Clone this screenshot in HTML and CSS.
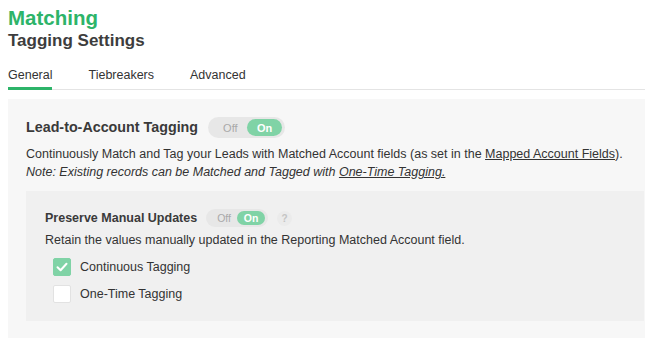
FILE: index.html
```html
<!DOCTYPE html>
<html lang="en">
<head>
<meta charset="utf-8">
<title>Matching - Tagging Settings</title>
<link rel="stylesheet" href="styles.css">
</head>
<body>
<div class="page">
  <h1 class="title">Matching</h1>
  <h2 class="subtitle">Tagging Settings</h2>
  <nav class="tabs">
    <span class="tab active">General</span>
    <span class="tab">Tiebreakers</span>
    <span class="tab">Advanced</span>
  </nav>
  <section class="panel">
    <div class="row">
      <h3 class="section-title">Lead-to-Account Tagging</h3>
      <div class="toggle">
        <span class="toggle-off">Off</span>
        <span class="toggle-on">On</span>
      </div>
    </div>
    <p class="desc">Continuously Match and Tag your Leads with Matched Account fields (as set in the <span class="link">Mapped Account Fields</span>).<br><em>Note: Existing records can be Matched and Tagged with <span class="link">One-Time Tagging.</span></em></p>
    <div class="subpanel">
      <div class="row">
        <h4 class="sub-title">Preserve Manual Updates</h4>
        <div class="toggle small">
          <span class="toggle-off">Off</span>
          <span class="toggle-on">On</span>
        </div>
        <span class="help">?</span>
      </div>
      <p class="sub-desc">Retain the values manually updated in the Reporting Matched Account field.</p>
      <ul class="checks">
        <li class="check-row">
          <span class="box checked"><svg width="12" height="10" viewBox="0 0 12 10"><path d="M1.5 5.2 L4.6 8.2 L10.5 1.8" fill="none" stroke="#fff" stroke-width="2" stroke-linecap="round" stroke-linejoin="round"/></svg></span>
          <span class="check-label">Continuous Tagging</span>
        </li>
        <li class="check-row">
          <span class="box"></span>
          <span class="check-label">One-Time Tagging</span>
        </li>
      </ul>
    </div>
  </section>
</div>
</body>
</html>
```

FILE: styles.css
```css
html, body {
  margin: 0;
  padding: 0;
  overflow: hidden;
  background: #ffffff;
}
body {
  font-family: "Liberation Sans", Arial, Helvetica, sans-serif;
  color: #333333;
}
.page {
  width: 654px;
  padding-left: 8px;
}
.title {
  margin: 6px 0 0 0;
  font-size: 20.5px;
  line-height: 24px;
  font-weight: bold;
  color: #2db469;
}
.subtitle {
  margin: 1px 0 0 0;
  font-size: 17px;
  line-height: 20px;
  font-weight: bold;
  color: #3d3d3d;
}
.tabs {
  display: flex;
  gap: 36px;
  margin-top: 16px;
  border-bottom: 1px solid #e4e4e4;
}
.tab {
  font-size: 12.5px;
  line-height: 16px;
  color: #333333;
  padding-bottom: 4px;
  border-bottom: 3px solid transparent;
  margin-bottom: -1px;
}
.tab.active {
  border-bottom-color: #2db469;
}
.panel {
  margin-top: 9px;
  background: #f7f7f7;
  padding: 18px 18px 17px 18px;
}
.row {
  display: flex;
  align-items: center;
}
.section-title {
  margin: 0 10px 0 0;
  font-size: 14.3px;
  line-height: 21px;
  font-weight: bold;
  color: #3a3a3a;
}
.toggle {
  display: flex;
  align-items: center;
  justify-content: space-between;
  box-sizing: border-box;
  width: 77px;
  height: 21px;
  padding: 2px 3px 2px 15px;
  border-radius: 11px;
  background: #e7e7e7;
}
.toggle-off {
  font-size: 11px;
  color: #a9a9a9;
}
.toggle-on {
  display: flex;
  align-items: center;
  justify-content: center;
  width: 35px;
  height: 17px;
  border-radius: 9px;
  background: #80d3a6;
  color: #ffffff;
  font-size: 11px;
  font-weight: bold;
}
.toggle.small {
  width: 62px;
  height: 18px;
  padding: 2px 3px 2px 11px;
  border-radius: 9px;
}
.toggle.small .toggle-off,
.toggle.small .toggle-on {
  font-size: 10.5px;
}
.toggle.small .toggle-on {
  width: 28px;
  height: 14px;
  border-radius: 7px;
}
.help {
  display: flex;
  align-items: center;
  justify-content: center;
  width: 15px;
  height: 15px;
  margin-left: 9px;
  border-radius: 50%;
  background: #ebebeb;
  color: #c4c4c4;
  font-size: 10px;
  font-weight: bold;
}
.desc {
  margin: 7px 0 0 0;
  font-size: 12.5px;
  line-height: 18px;
  color: #333333;
}
.link {
  text-decoration: underline;
}
.subpanel {
  margin-top: 10px;
  background: #f0f0f0;
  padding: 18px 18px 18px 19px;
}
.sub-title {
  margin: 0 9px 0 0;
  font-size: 12.5px;
  line-height: 18px;
  font-weight: bold;
  color: #3a3a3a;
}
.sub-desc {
  margin: 4px 0 0 0;
  font-size: 12.5px;
  line-height: 18px;
}
.checks {
  list-style: none;
  margin: 9px 0 0 8px;
  padding: 0;
  display: flex;
  flex-direction: column;
  gap: 9px;
}
.check-row {
  display: flex;
  align-items: center;
  gap: 9px;
}
.box {
  display: flex;
  align-items: center;
  justify-content: center;
  box-sizing: border-box;
  width: 18px;
  height: 18px;
  border-radius: 2px;
  background: #ffffff;
  border: 1px solid #e2e2e2;
}
.box.checked {
  background: #80d3a6;
  border-color: #80d3a6;
}
.check-label {
  font-size: 12.5px;
  line-height: 18px;
}
```
